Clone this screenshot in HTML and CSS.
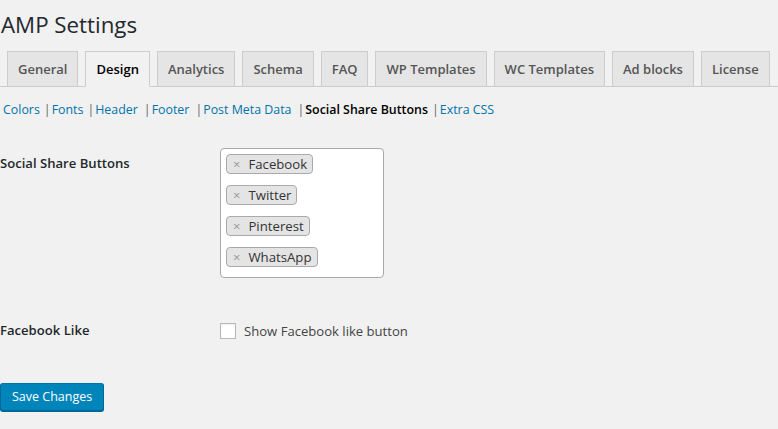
FILE: index.html
```html
<!DOCTYPE html>
<html lang="en">
<head>
<meta charset="utf-8">
<title>AMP Settings</title>
<link rel="stylesheet" href="styles.css">
</head>
<body>
<div class="wrap">
  <h1 class="page-title">AMP Settings</h1>
  <nav class="nav-tabs">
    <a class="nav-tab">General</a>
    <a class="nav-tab nav-tab-active">Design</a>
    <a class="nav-tab">Analytics</a>
    <a class="nav-tab">Schema</a>
    <a class="nav-tab">FAQ</a>
    <a class="nav-tab">WP Templates</a>
    <a class="nav-tab">WC Templates</a>
    <a class="nav-tab">Ad blocks</a>
    <a class="nav-tab">License</a>
  </nav>
  <ul class="subnav">
    <li><a class="sub-link">Colors</a><span class="sep">|</span></li>
    <li><a class="sub-link">Fonts</a><span class="sep">|</span></li>
    <li><a class="sub-link">Header</a><span class="sep sep-wide">|</span></li>
    <li><a class="sub-link">Footer</a><span class="sep sep-wide">|</span></li>
    <li><a class="sub-link">Post Meta Data</a><span class="sep sep-wide">|</span></li>
    <li><span class="sub-current">Social Share Buttons</span><span class="sep">|</span></li>
    <li><a class="sub-link">Extra CSS</a></li>
  </ul>

  <form class="settings">
    <div class="row row-share">
      <div class="row-label">Social Share Buttons</div>
      <div class="row-field">
        <ul class="tag-box">
          <li class="tag"><span class="tag-x">×</span>Facebook</li>
          <li class="tag"><span class="tag-x">×</span>Twitter</li>
          <li class="tag"><span class="tag-x">×</span>Pinterest</li>
          <li class="tag"><span class="tag-x">×</span>WhatsApp</li>
        </ul>
      </div>
    </div>
    <div class="row row-like">
      <div class="row-label">Facebook Like</div>
      <div class="row-field">
        <label class="check-label"><span class="checkbox"></span>Show Facebook like button</label>
      </div>
    </div>
    <div class="submit">
      <button type="button" class="button-primary">Save Changes</button>
    </div>
  </form>
</div>
</body>
</html>
```

FILE: styles.css
```css
html, body {
  margin: 0;
  padding: 0;
  background: #f1f1f1;
}
body {
  font-family: "Open Sans", "Noto Sans", sans-serif;
  color: #23282d;
  font-size: 13px;
}
.wrap {
  width: 778px;
  height: 429px;
  overflow: hidden;
}
.page-title {
  margin: 0;
  padding: 10px 0 0 1px;
  font-size: 22.3px;
  font-weight: 400;
  line-height: 29px;
  color: #23282d;
  height: 41px;
}
.nav-tabs {
  display: flex;
  border-bottom: 1px solid #ccc;
  height: 35px;
}
.nav-tab {
  margin-left: 7px;
  padding: 5px 10px;
  font-size: 13px;
  font-weight: 600;
  line-height: 24px;
  color: #555;
  background: #e5e5e5;
  border: 1px solid #ccc;
  white-space: nowrap;
  height: 24px;
}
.nav-tab-active {
  background: #f1f1f1;
  color: #000;
  border-bottom-color: #f1f1f1;
}
.subnav {
  display: flex;
  list-style: none;
  margin: 13px 0 0 0;
  padding: 0 0 0 3px;
  font-size: 12.4px;
  line-height: 20px;
  height: 20px;
}
.sub-link {
  color: #0073aa;
}
.sub-current {
  color: #000;
  font-weight: 600;
}
.sep {
  color: #666;
  margin: 0 1px 0 4px;
}
.sep-wide {
  margin-left: 6px;
}
.settings {
  margin-top: 13px;
}
.row {
  display: flex;
}
.row-label {
  width: 220px;
  flex: none;
  font-size: 13.1px;
  font-weight: 600;
  line-height: 18px;
  padding-top: 21px;
  color: #23282d;
}
.row-field {
  padding-top: 15px;
}
.tag-box {
  list-style: none;
  margin: 0;
  box-sizing: border-box;
  width: 164px;
  height: 130px;
  padding: 5px 5px 0 5px;
  background: #fff;
  border: 1px solid #aaa;
  border-radius: 4px;
  display: flex;
  flex-direction: column;
  align-items: flex-start;
  gap: 11px;
}
.tag {
  box-sizing: border-box;
  height: 20px;
  line-height: 18px;
  padding: 0 5px 0 5px;
  background: #e4e4e4;
  border: 1px solid #aaa;
  border-radius: 4px;
  font-size: 13.2px;
  color: #333;
}
.tag-x {
  color: #999;
  font-size: 13px;
  margin-right: 8px;
  margin-left: 1px;
}
.row-like {
  margin-top: 23px;
}
.row-like .row-label {
  padding-top: 20px;
}
.row-like .row-field {
  padding-top: 20px;
}
.check-label {
  display: flex;
  align-items: center;
  font-size: 13.1px;
  line-height: 20px;
  color: #444;
}
.checkbox {
  width: 16px;
  height: 16px;
  box-sizing: border-box;
  border: 1px solid #b4b9be;
  background: #fff;
  box-shadow: inset 0 1px 2px rgba(0,0,0,0.07);
  margin-right: 8px;
}
.submit {
  margin-top: 42px;
}
.button-primary {
  height: 28px;
  padding: 0 11px 1px;
  font-family: "Open Sans", "Noto Sans", sans-serif;
  font-size: 12.5px;
  line-height: 26px;
  color: #fff;
  background: #0085ba;
  border: 1px solid;
  border-color: #0073aa #006799 #006799;
  border-radius: 3px;
  box-shadow: 0 1px 0 #006799;
  cursor: pointer;
}
```
